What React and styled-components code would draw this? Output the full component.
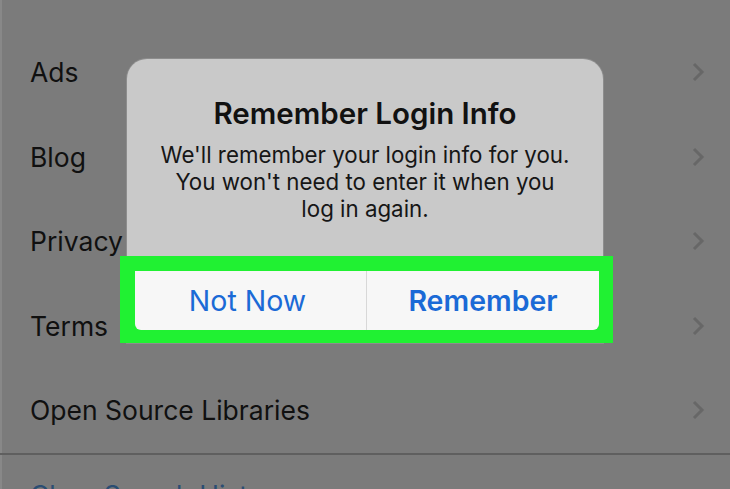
import React from "react";
import styled, { createGlobalStyle } from "styled-components";

const Global = createGlobalStyle`
  html, body {
    margin: 0;
    padding: 0;
    background: #7b7b7b;
    overflow: hidden;
  }
  * { box-sizing: border-box; }
`;

const Screen = styled.div`
  position: relative;
  width: 730px;
  height: 489px;
  background: #7b7b7b;
  font-family: Inter, "Liberation Sans", sans-serif;
  overflow: hidden;
  box-shadow: inset 2px 0 0 #888;
`;

const List = styled.div`
  display: flex;
  flex-direction: column;
  padding-top: 30px;
`;

const Row = styled.div`
  display: flex;
  align-items: center;
  justify-content: space-between;
  height: 84.5px;
  padding: 0 25px 0 30px;
  font-size: 26.5px;
  color: #101010;
`;

const Divider = styled.div`
  height: 2px;
  background: #5f5f5f;
`;

const LinkRow = styled.div`
  padding: 24px 0 0 30px;
  font-size: 26.5px;
  color: #2b4d73;
`;

const Chevron = () => (
  <svg width="14" height="22" viewBox="0 0 14 22">
    <path d="M3 3 L11 11 L3 19" fill="none" stroke="#676767" strokeWidth="3" />
  </svg>
);

const Dialog = styled.div`
  position: absolute;
  left: 127px;
  top: 59px;
  width: 476px;
  background: #c9c9c9;
  border-radius: 20px 20px 0 0;
  box-shadow: 0 0 0 1px #8d8d8d;
`;

const Body = styled.div`
  padding: 37px 10px 34px;
  text-align: center;
`;

const Title = styled.div`
  font-size: 29.5px;
  font-weight: 600;
  line-height: 34px;
  color: #111;
`;

const Message = styled.div`
  margin-top: 11px;
  font-size: 22.3px;
  line-height: 27px;
  color: #161616;
`;

const Highlight = styled.div`
  margin: 0 -10px 0 -7px;
  padding: 15px 14px 13px 15px;
  background: #20f132;
`;

const Buttons = styled.div`
  display: grid;
  grid-template-columns: 231px 1fr;
  height: 59px;
  background: #f7f7f7;
  border-radius: 0 0 6px 6px;
`;

const Button = styled.div`
  display: flex;
  align-items: center;
  justify-content: center;
  padding-right: ${(p) => (p.$bold ? 0 : 6)}px;
  font-size: 28.5px;
  font-weight: ${(p) => (p.$bold ? 600 : 400)};
  color: #1b6ad6;
  border-left: ${(p) => (p.$divider ? "1px solid #d8d8d8" : "none")};
`;

const items = ["Ads", "Blog", "Privacy", "Terms", "Open Source Libraries"];

export default function App() {
  return (
    <>
      <Global />
      <Screen>
        <List>
          {items.map((t) => (
            <Row key={t}>
              <span>{t}</span>
              <Chevron />
            </Row>
          ))}
        </List>
        <Divider />
        <LinkRow>Clear Search History</LinkRow>
        <Dialog>
          <Body>
            <Title>Remember Login Info</Title>
            <Message>
              We'll remember your login info for you.
              <br />
              You won't need to enter it when you
              <br />
              log in again.
            </Message>
          </Body>
          <Highlight>
            <Buttons>
              <Button>Not Now</Button>
              <Button $bold $divider>
                Remember
              </Button>
            </Buttons>
          </Highlight>
        </Dialog>
      </Screen>
    </>
  );
}
